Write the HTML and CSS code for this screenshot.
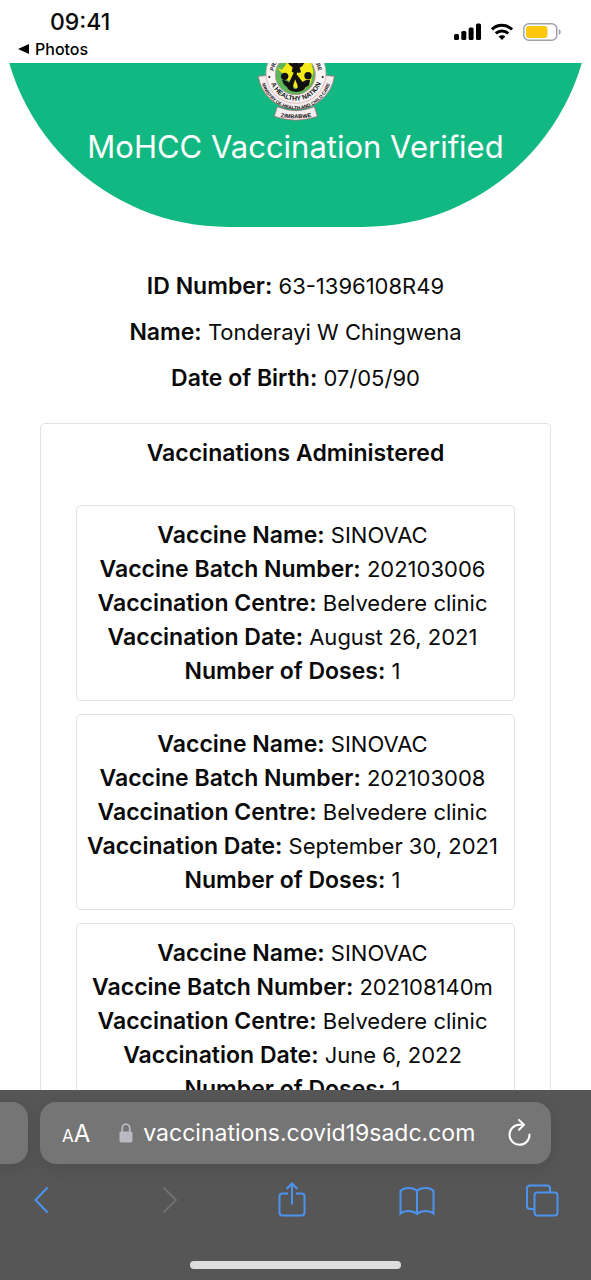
FILE: index.html
```
<!DOCTYPE html>
<html lang="en">
<head>
  <meta charset="UTF-8" />
  <meta name="viewport" content="width=device-width, initial-scale=1.0"/>
  <title>MoHCC Vaccination Verified</title>
  <link rel="stylesheet" href="styles.css">
</head>
<body>
  <header class="status-bar">
    <div class="status-left">
      <div class="time">09:41</div>
      <a class="back-app" href="#">
        <svg width="11" height="12" viewBox="0 0 11 12"><path d="M11 1v10L0 6z" fill="#000"/></svg>
        Photos
      </a>
    </div>
    <div class="status-icons">
      <!-- Signal -->
      <svg width="27" height="18" viewBox="0 0 27 18">
        <rect x="0" y="11" width="5" height="6" rx="1.5"/>
        <rect x="7.3" y="8" width="5" height="9" rx="1.5"/>
        <rect x="14.6" y="4.5" width="5" height="12.5" rx="1.5"/>
        <rect x="22" y="0.5" width="5" height="16.5" rx="1.5"/>
      </svg>
      <!-- Wifi -->
      <svg width="22" height="18" viewBox="0 0 22 18" fill="none" stroke="#000" stroke-width="3">
        <path d="M1 6.4a14.3 14.3 0 0 1 20 0"/>
        <path d="M4.8 10.4a8.9 8.9 0 0 1 12.4 0"/>
        <path d="M11 17l-3.4-3.5a4.9 4.9 0 0 1 6.8 0z" fill="#000" stroke="none"/>
      </svg>
      <!-- Battery -->
      <svg width="38" height="18" viewBox="0 0 38 18">
        <rect x="0.8" y="0.8" width="33" height="16.4" rx="5" fill="#fff" stroke="#a3a1a8" stroke-width="1.5"/>
        <rect x="3" y="3" width="21.5" height="12" rx="3" fill="#fbc70f"/>
        <path d="M35.8 6v6q2-1 2-3t-2-3z" fill="#a3a1a8"/>
      </svg>
    </div>
  </header>

  <main>
    <section class="hero">
      <svg class="logo" viewBox="48 -36 240 240" role="img" aria-label="Ministry of Health and Child Care">
        <defs>
          <path id="ringBottom" d="M88 60a80 80 0 0 0 160 0"/>
          <path id="ringTop" d="M100 62a68 68 0 0 1 136 0"/>
          <path id="ribbonText" d="M62 60a106 106 0 0 0 212 0"/>
          <path id="bannerText" d="M104 185q64 16 128 0"/>
          <clipPath id="disc"><circle cx="166" cy="62" r="60"/></clipPath>
        </defs>
        <!-- Ribbon -->
        <path d="M55 67L85 64A84 84 0 0 0 251 64L283 67A115 113 0 0 1 55 67z" fill="#f6eeee" stroke="#b5616b" stroke-width="2"/>
        <path d="M112 158L103 187Q168 210 232 187L223 158Q168 182 112 158z" fill="#f6eeee" stroke="#b5616b" stroke-width="2"/>
        <!-- Ring -->
        <circle cx="168" cy="58" r="90" fill="#f8f4f4" stroke="#d8a0a6" stroke-width="2"/>
        <circle cx="166" cy="62" r="60" fill="#5fb55a" stroke="#c9838a" stroke-width="2"/>
        <g clip-path="url(#disc)">
          <path d="M112 42l14 5 8-10 18-28 34-4 26 14 8 34-8 34-20 20-28-6-14-20-16-6-8-18z" fill="#f1ea16"/>
          <path d="M147 22q8 8 12 5-1-8 7-8t9 8q6 3 10-6l8 5q-4 12-14 15l4 14-9 2-5-7-6 7-8-4 3-13q-10-5-14-14z" fill="#111"/>
          <circle cx="134" cy="67" r="11" fill="#111"/>
          <circle cx="204" cy="65" r="11" fill="#111"/>
          <path d="M127 78q12-2 20 8l18-38 9 1-14 44q-3 12 6 12 10-1 6-13l-9-22 8-8 17 22q8-8 22-7 1 17-13 23-6 13-28 14-23-1-28-15-13-8-14-21z" fill="#111"/>
        </g>
        <text class="ring-top-text"><textPath href="#ringTop" startOffset="50%">PRIMARY HEALTH CARE</textPath></text>
        <text class="ring-text"><textPath href="#ringBottom" startOffset="50%">A HEALTHY NATION</textPath></text>
        <circle cx="88" cy="69" r="3" fill="#111"/>
        <circle cx="248" cy="69" r="3" fill="#111"/>
        <text class="ribbon-text"><textPath href="#ribbonText" startOffset="50%">MINISTRY OF HEALTH AND CHILD CARE</textPath></text>
        <text class="banner-text"><textPath href="#bannerText" startOffset="50%">ZIMBABWE</textPath></text>
      </svg>
      <h1>MoHCC Vaccination Verified</h1>
    </section>

    <section class="person">
      <p><strong>ID Number:</strong> 63-1396108R49</p>
      <p><strong>Name:</strong> Tonderayi W Chingwena</p>
      <p><strong>Date of Birth:</strong> 07/05/90</p>
    </section>

    <section class="vaccinations">
      <h2>Vaccinations Administered</h2>
      <div class="card">
        <p><strong>Vaccine Name:</strong> SINOVAC</p>
        <p><strong>Vaccine Batch Number:</strong> 202103006</p>
        <p><strong>Vaccination Centre:</strong> Belvedere clinic</p>
        <p><strong>Vaccination Date:</strong> August 26, 2021</p>
        <p><strong>Number of Doses:</strong> 1</p>
      </div>
      <div class="card">
        <p><strong>Vaccine Name:</strong> SINOVAC</p>
        <p><strong>Vaccine Batch Number:</strong> 202103008</p>
        <p><strong>Vaccination Centre:</strong> Belvedere clinic</p>
        <p><strong>Vaccination Date:</strong> September 30, 2021</p>
        <p><strong>Number of Doses:</strong> 1</p>
      </div>
      <div class="card">
        <p><strong>Vaccine Name:</strong> SINOVAC</p>
        <p><strong>Vaccine Batch Number:</strong> 202108140m</p>
        <p><strong>Vaccination Centre:</strong> Belvedere clinic</p>
        <p><strong>Vaccination Date:</strong> June 6, 2022</p>
        <p><strong>Number of Doses:</strong> 1</p>
      </div>
    </section>
  </main>

  <footer class="browser-bar">
    <div class="tabs-row">
      <div class="prev-tab"></div>
      <div class="address">
        <button class="text-size" aria-label="Text size"><small>A</small>A</button>
        <svg class="lock" width="14" height="20" viewBox="0 0 14 20">
          <path d="M3.2 9V5.5a3.8 4.3 0 0 1 7.6 0V9" fill="none" stroke="#bcb9c3" stroke-width="1.8"/>
          <rect x="0.5" y="8.5" width="13" height="11" rx="1.8" fill="#bcb9c3"/>
        </svg>
        <input type="text" aria-label="Address" value="vaccinations.covid19sadc.com">
        <button class="reload" aria-label="Reload">
          <svg width="24" height="28" viewBox="0 0 24 28" fill="none" stroke="#fff" stroke-width="2" stroke-linecap="round" stroke-linejoin="round">
            <path d="M16 5.8H12.5A10 10 0 1 0 22.5 15.5"/>
            <path d="M12 1l5 4.8-5 5"/>
          </svg>
        </button>
      </div>
    </div>
    <nav class="tools">
      <button aria-label="Back">
        <svg width="36" height="36" viewBox="0 0 36 36"><path d="M24.5 5.5L12.5 18l12 12.5"/></svg>
      </button>
      <button class="off" aria-label="Forward" disabled>
        <svg width="36" height="36" viewBox="0 0 36 36"><path d="M15.5 5.5L28 18 15.5 30.5"/></svg>
      </button>
      <button aria-label="Share">
        <svg width="36" height="36" viewBox="0 0 36 36"><path d="M14 11.5H8.5q-3 0-3 3v16q0 3 3 3h19q3 0 3-3v-16q0-3-3-3H22M18 22.5V1.5M12.5 7L18 1.5 23.5 7"/></svg>
      </button>
      <button aria-label="Bookmarks">
        <svg width="36" height="36" viewBox="0 0 36 36"><path d="M18 9Q15 6 9.5 6 4 6 1.5 9V31.5q3-2.5 8-2.5t8.5 3q3.5-3 8.500-3t8 2.500V9Q32 6 26.5 6 21 6 18 9zV31"/></svg>
      </button>
      <button aria-label="Tabs">
        <svg width="36" height="36" viewBox="0 0 36 36"><rect x="10.5" y="10.5" width="23" height="23" rx="3"/><path d="M10.5 27H6q-3 0-3-3V6.5q0-3 3-3h17q3 0 3 3v4"/></svg>
      </button>
    </nav>
    <div class="home-indicator"></div>
  </footer>
</body>
</html>
```
FILE: styles.css
```
* {
  box-sizing: border-box;
}

body {
  font-family: Inter, "Liberation Sans", sans-serif;
  font-size: 22px;
  line-height: 34px;
  margin: 0;
  height: 100vh;
  display: flex;
  flex-direction: column;
  background-color: #fff;
  color: #0a0a0a;
}

h1, h2, p {
  margin: 0;
}

strong {
  font-size: 23px;
  line-height: 32px;
  font-weight: 600;
}

button {
  padding: 0;
  border: none;
  background: none;
  font-family: inherit;
  cursor: pointer;
}

svg {
  display: block;
}

/* Status bar */
.status-bar {
  flex: none;
  display: flex;
  justify-content: space-between;
  padding: 8px 30px 0 18px;
  height: 63px;
}

.time {
  padding-left: 32px;
  font-size: 23px;
  line-height: 28px;
  font-weight: 500;
}

.back-app {
  display: flex;
  align-items: center;
  gap: 6px;
  font-size: 16px;
  line-height: 26px;
  font-weight: 500;
  color: #000;
  text-decoration: none;
}

.status-icons {
  display: flex;
  gap: 10px;
  padding-top: 15px;
}

/* Page */
main {
  flex: 1;
  min-height: 0;
  overflow: hidden;
}

.hero {
  display: flex;
  flex-direction: column;
  align-items: center;
  justify-content: flex-end;
  height: 240px;
  margin-top: -76px;
  padding-bottom: 55px;
  border-radius: 0 0 228px 228px;
  background-color: #12b882;
  color: #fff;
}

.logo {
  width: 80px;
  height: 80px;
}

.logo text {
  font-family: "Liberation Sans", sans-serif;
  font-weight: bold;
  text-anchor: middle;
  fill: #111;
}

.logo .ring-top-text {
  font-size: 16px;
}

.logo .ring-text {
  font-size: 20px;
}

.logo .ribbon-text {
  font-size: 14px;
}

.logo .banner-text {
  font-size: 17px;
}

h1 {
  font-size: 31px;
  line-height: 50px;
  font-weight: 400;
}

.person {
  display: flex;
  flex-direction: column;
  gap: 12px;
  padding: 42px 0 28px;
  text-align: center;
}

.vaccinations {
  display: flex;
  flex-direction: column;
  gap: 13px;
  margin: 0 40px;
  padding: 12px 35px;
  border: 1px solid #e2e2e4;
  border-radius: 5px;
  text-align: center;
}

h2 {
  margin-bottom: 22px;
  font-size: 23px;
  font-weight: 600;
}

.card {
  padding: 12px 6px 12px 0;
  border: 1px solid #e2e2e4;
  border-radius: 5px;
}

/* Browser bar */
.browser-bar {
  flex: none;
  height: 190px;
  padding-top: 12px;
  background-color: #565656;
}

.tabs-row {
  display: flex;
  gap: 12px;
  padding-right: 40px;
}

.prev-tab {
  width: 28px;
  border-radius: 0 16px 16px 0;
  background-color: #757575;
  box-shadow: 0 4px 16px rgba(0,0,0,0.1);
}

.address {
  flex: 1;
  display: flex;
  align-items: center;
  height: 62px;
  padding: 0 20px 0 22px;
  border-radius: 16px;
  background-color: #757575;
  box-shadow: 0 4px 16px rgba(0,0,0,0.1);
}

.address input {
  flex: 1;
  min-width: 0;
  padding: 0;
  border: none;
  outline: none;
  background: none;
  font-family: inherit;
  font-size: 23px;
  color: #fff;
}

.text-size {
  font-size: 24px;
  color: #fff;
}

.text-size small {
  font-size: 17px;
}

.lock {
  margin: 0 10px 0 29px;
}

.tools {
  display: flex;
  justify-content: space-between;
  padding: 18px 31px 0 23px;
}

.tools svg {
  fill: none;
  stroke: #4c93f0;
  stroke-width: 2;
}

.tools .off svg {
  stroke: #707070;
}

.home-indicator {
  width: 211px;
  height: 8px;
  margin: 43px auto 0;
  border-radius: 4px;
  background-color: #dedede;
}
```
